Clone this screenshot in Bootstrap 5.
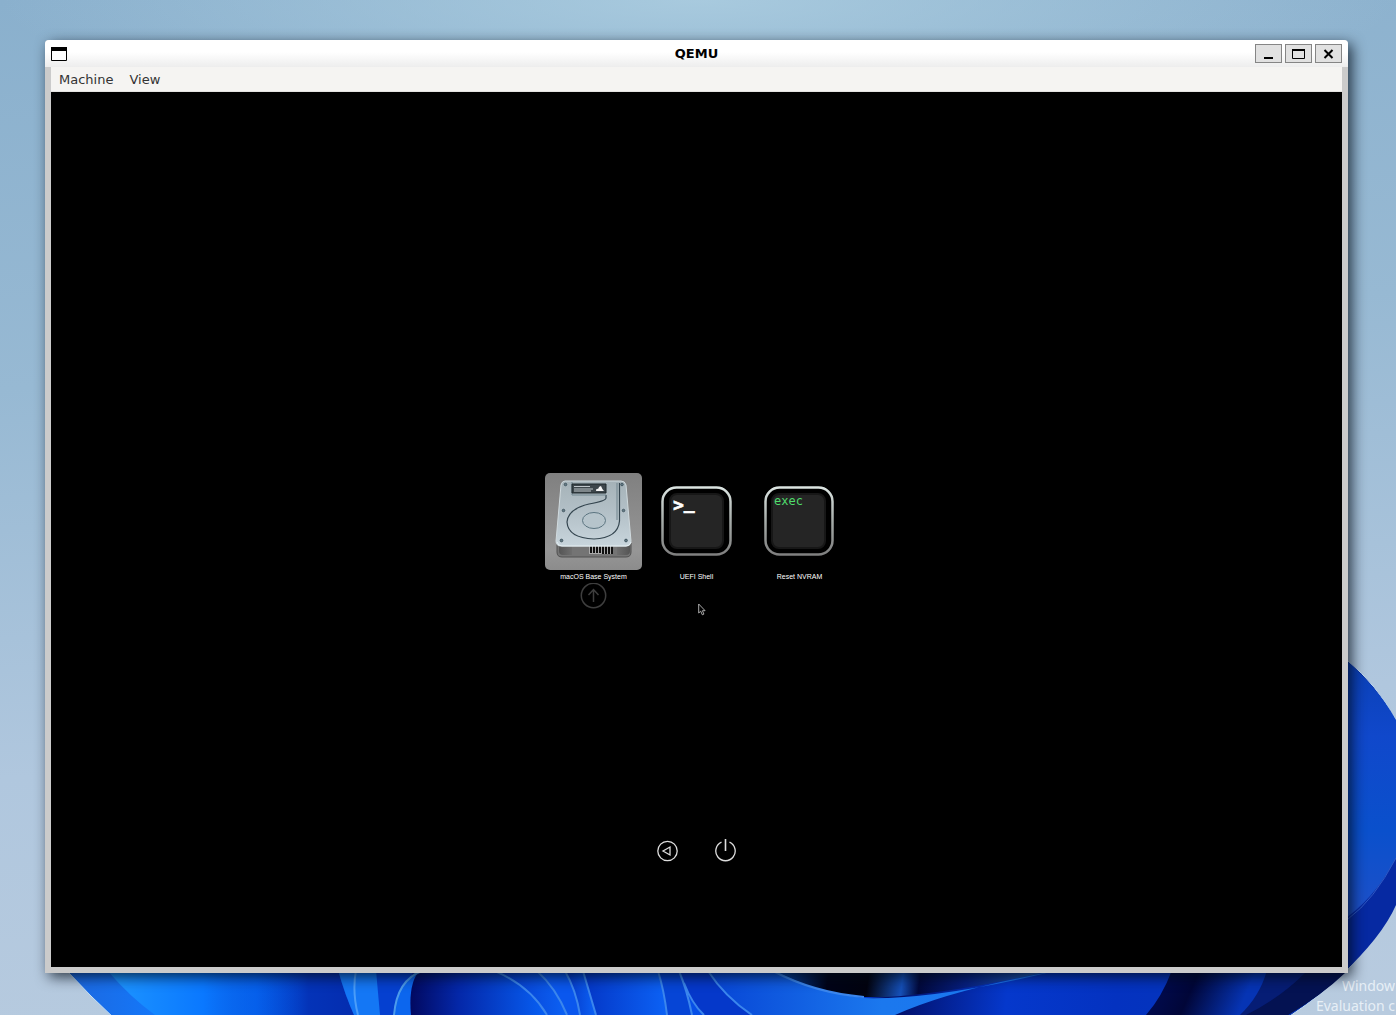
<!DOCTYPE html>
<html lang="en">
<head>
<meta charset="utf-8">
<meta name="viewport" content="width=device-width, initial-scale=1">
<title>QEMU</title>
<link rel="stylesheet" href="https://cdn.jsdelivr.net/npm/bootstrap@5.3.0/dist/css/bootstrap.min.css">
<style>
body { font-family: "DejaVu Sans", sans-serif; font-size: 13px; line-height: 16px; background: #a9c4db; }
.desktop { padding: 40px 48px 42px 45px; background: radial-gradient(ellipse 50% 12% at 50% 0, rgba(175, 208, 226, .8), transparent), linear-gradient(176deg, #8ab0cd 0%, #97b9d3 35%, #b0c7de 70%, #b8cbdf 100%); }
.wallpaper { z-index: 0; }
.watermark { right: 1px; bottom: -1px; font-family: "Noto Sans", sans-serif; font-size: 14px; line-height: 20px; color: #f0f6fb; opacity: .85; }
.vm-window { z-index: 1; border-radius: 4px 4px 0 0; background: #cbcbcb; box-shadow: 4px 4px 14px rgba(0, 10, 20, .75); }
.titlebar { height: 27px; padding: 0 6px; border-radius: 4px 4px 0 0; background: linear-gradient(#fff 45%, #ededed); color: #000; }
.title-side { width: 87px; gap: 3px; }
.title-btn { width: 27px; height: 19px; padding: 0; border: 1px solid #858585; border-radius: 0; background: #e1e1e1; }
.title-btn svg { display: block; margin: auto; }
.frame { padding: 0 6px 6px; }
.menus { height: 25px; background: #f5f4f2; border-bottom: 1px solid #e4e3e1; padding: 1px 8px 0; gap: 16px; }
.menus a { color: #333; text-decoration: none; }
.screen { background: #000; display: grid; grid-template-rows: 381fr 136px 358fr; color: #fff; font-family: "Liberation Sans", sans-serif; }
.entries { grid-row: 2; gap: 6px; }
.entry { width: 97px; padding: 0; border: 0; background: none; color: #fff; font-size: 7px; line-height: 13px; white-space: nowrap; }
.entry-tile { height: 97px; border-radius: 5px; }
.entry.selected .entry-tile { background: linear-gradient(#808080, #969696 80%, #8c8c8c); }
.tools { grid-row: 3; padding-bottom: 105px; gap: 36px; }
.tools button { padding: 0; border: 0; background: none; }
.tools svg, .entry svg { display: block; }
.pointer { left: calc(50% + 1px); top: calc(50% + 73px); }
.exec-text { font: 12px "DejaVu Sans Mono", monospace; fill: #4fdc6c; }
.prompt-text { font: bold 18px "DejaVu Sans Mono", monospace; fill: #fff; }
</style>
<script src="https://cdn.jsdelivr.net/npm/bootstrap@5.3.0/dist/js/bootstrap.bundle.min.js"></script>
</head>
<body>
<div class="desktop position-relative overflow-hidden vh-100 d-flex flex-column">
  <svg class="wallpaper position-absolute top-0 start-0 w-100 h-100" viewBox="0 0 1396 1015" preserveAspectRatio="none" aria-hidden="true">
    <defs>
      <linearGradient id="petals" gradientUnits="userSpaceOnUse" x1="70" y1="0" x2="1396" y2="0">
        <stop offset="0" stop-color="#1c68e0"/><stop offset=".08" stop-color="#127bff"/><stop offset=".14" stop-color="#056bfb"/><stop offset=".18" stop-color="#0433b8"/><stop offset=".24" stop-color="#0428a8"/><stop offset=".4" stop-color="#0756ef"/><stop offset=".7" stop-color="#0538cf"/><stop offset="1" stop-color="#061a80"/>
      </linearGradient>
      <linearGradient id="rightPetal" x1="0" y1="0" x2="0" y2="1">
        <stop offset="0" stop-color="#0a3fb4"/><stop offset=".3" stop-color="#1048cb"/><stop offset=".65" stop-color="#0a50cc"/><stop offset="1" stop-color="#2050c8"/>
      </linearGradient>
      <linearGradient id="brightLeft" gradientUnits="userSpaceOnUse" x1="107" y1="0" x2="300" y2="0">
        <stop offset="0" stop-color="#1e96ff"/><stop offset=".5" stop-color="#0a78ff"/><stop offset="1" stop-color="#0433b8" stop-opacity="0"/>
      </linearGradient>
      <linearGradient id="inner" x1="0" y1="0" x2="1" y2="0">
        <stop offset="0" stop-color="#020960"/><stop offset=".35" stop-color="#0427a8"/><stop offset="1" stop-color="#0760f5"/>
      </linearGradient>
      <linearGradient id="fold" x1="0" y1="0" x2="1" y2="0">
        <stop offset="0" stop-color="#0436c6"/><stop offset="1" stop-color="#0c62f5"/>
      </linearGradient>
      <linearGradient id="wide" x1="0" y1="0" x2="1" y2="0">
        <stop offset="0" stop-color="#0745d5"/><stop offset=".5" stop-color="#1b78ee"/><stop offset="1" stop-color="#1a76f0"/>
      </linearGradient>
      <linearGradient id="deep" gradientUnits="userSpaceOnUse" x1="773" y1="960" x2="1055" y2="1000">
        <stop offset="0" stop-color="#0752c8"/><stop offset=".2" stop-color="#000318"/><stop offset=".34" stop-color="#02030f"/><stop offset=".46" stop-color="#1550b8"/><stop offset=".52" stop-color="#02093c"/><stop offset=".68" stop-color="#061f80"/><stop offset="1" stop-color="#2a6fc4"/>
      </linearGradient>
      <linearGradient id="east" gradientUnits="userSpaceOnUse" x1="900" y1="975" x2="1260" y2="1015">
        <stop offset="0" stop-color="#02106a"/><stop offset=".3" stop-color="#0538cc"/><stop offset=".6" stop-color="#0432c0"/><stop offset="1" stop-color="#0436b8"/>
      </linearGradient>
      <linearGradient id="crease" gradientUnits="userSpaceOnUse" x1="1155" y1="985" x2="1235" y2="1020">
        <stop offset="0" stop-color="#010b50"/><stop offset=".4" stop-color="#010638"/><stop offset="1" stop-color="#0634b4"/>
      </linearGradient>
    </defs>
    <path d="M68 972Q90 996 116 1020H1284Q1322 995 1350 967Q1382 932 1396 905V720Q1376 684 1348 661L1300 640V940H68Z" fill="url(#petals)" stroke="#c7e2f5"/>
    <path d="M1340 655Q1376 684 1396 720V868Q1372 905 1340 925Z" fill="url(#rightPetal)"/>
    <path d="M1396 858Q1374 900 1340 922V976Q1382 937 1396 905Z" fill="#0629a2"/>
    <path d="M1396 858Q1374 900 1348 919" fill="none" stroke="#2f59c4"/>
    <path d="M107 970Q130 997 155 1015H300V970Z" fill="url(#brightLeft)"/>
    <path d="M338 970Q345 995 354 1015H412V970Z" fill="#0540d0"/>
    <path d="M338 970Q345 995 354 1015H380L376 970Z" fill="#1477f5"/>
    <path d="M356 970Q352 992 358 1015" fill="none" stroke="#4a9df9" stroke-width="2"/>
    <path d="M394 1015Q397 980 422 970H500L555 1015Z" fill="#0c66ee"/>
    <path d="M411 1015Q408 983 420 970H495Q526 983 547 1015Z" fill="url(#inner)"/>
    <path d="M394 1015Q397 980 422 971" fill="none" stroke="#4c9bec" stroke-width="2"/>
    <path d="M495 970Q528 986 547 1015H567Q555 988 537 970Z" fill="url(#fold)"/>
    <path d="M537 970Q556 988 567 1015H580Q576 988 565 970Z" fill="#0a57ee"/>
    <path d="M565 970Q576 990 580 1015H596L583 970Z" fill="url(#fold)"/>
    <path d="M583 970L596 1015H667Q664 990 658 970Z" fill="url(#fold)"/>
    <path d="M658 970Q664 990 667 1015H692Q688 990 679 970Z" fill="#0645d6"/>
    <path d="M679 970Q687 1000 704 1015H752Q725 997 708 970Z" fill="#0538ca"/>
    <path d="M773 970Q830 999 864 997H940L1070 970Z" fill="url(#deep)"/>
    <path d="M864 998Q950 996 1070 966H1350Q1322 995 1290 1015H860Z" fill="url(#east)"/>
    <path d="M708 970Q725 997 752 1015H895Q950 990 1055 971Q935 1000 864 998Q810 991 773 970Z" fill="url(#wide)"/>
    <path d="M495 971Q530 986 547 1015M537 971Q556 988 567 1015M565 971Q576 990 580 1015M583 971L596 1015M658 971Q664 990 667 1015M679 971Q687 990 692 1015M684 983Q692 1004 704 1015M708 971Q725 997 752 1015M773 971Q815 993 864 997" fill="none" stroke="#3b86ed" stroke-width="2"/>
    <path d="M1172 970Q1162 997 1146 1015H1242Q1260 996 1267 970Z" fill="url(#crease)"/>
    <path d="M1267 970Q1260 996 1240 1015H1288Q1322 995 1347 970Z" fill="#061d75"/>
    <path d="M1305 973Q1280 998 1246 1015H1288Q1322 995 1345 973Z" fill="#041252"/>
  </svg>
  <div class="watermark position-absolute text-end">Window<br>Evaluation c</div>

  <main class="vm-window position-relative flex-fill d-flex flex-column">
    <header class="titlebar d-flex justify-content-between align-items-center">
      <div class="title-side">
        <svg class="d-block" width="16" height="14" aria-hidden="true"><path d="M.5 .5h15v13H.5z" fill="#fff" stroke="#000"/><path d="M0 0h16v4H0z"/></svg>
      </div>
      <strong>QEMU</strong>
      <div class="title-side d-flex justify-content-end">
        <button class="title-btn" aria-label="Minimize"><svg width="25" height="17"><path d="M8 12h9v2H8z"/></svg></button>
        <button class="title-btn" aria-label="Maximize"><svg width="25" height="17"><path d="M6.500 4.500h12v9h-12z" fill="none" stroke="#000"/><path d="M6 4h13v2H6z"/></svg></button>
        <button class="title-btn" aria-label="Close"><svg width="25" height="17"><path d="M8.500 5l8 8m0-8l-8 8" fill="none" stroke="#000" stroke-width="2"/></svg></button>
      </div>
    </header>
    <div class="frame flex-fill d-flex flex-column">
      <nav class="menus d-flex align-items-center"><a href="#">Machine</a><a href="#">View</a></nav>
      <section class="screen position-relative flex-fill">
        <div class="entries d-flex justify-content-center align-items-start">
          <button class="entry selected">
            <span class="entry-tile d-block">
              <svg width="97" height="97" viewBox="0 0 97 97" aria-hidden="true">
                <defs>
                  <linearGradient id="metal" x1="0" y1="0" x2="0" y2="1"><stop offset="0" stop-color="#a5b2b8"/><stop offset=".5" stop-color="#b4c1c8"/><stop offset="1" stop-color="#c8d5dc"/></linearGradient>
                  <linearGradient id="foot"><stop offset="0" stop-color="#555"/><stop offset=".5" stop-color="#999"/><stop offset="1" stop-color="#555"/></linearGradient>
                </defs>
                <path d="M12 70h74v9q0 5-5 5H17q-5 0-5-5z" fill="#747474" stroke="#505050"/>
                <path d="M14 72h13v10h-9q-4 0-4-4zM72 72h13v6q0 4-4 4h-9z" fill="url(#foot)"/>
                <path d="M44 73h24v8H44z" fill="#aaa"/>
                <path d="M46 73v7m3-7v7m3-7v7m3-7v7m3-7v8m3-8v8m3-8v8m3-8v8" stroke="#111" stroke-width="2"/>
                <path d="M20 8h56q4 0 5 4l5 56q0 5-5 5H16q-5 0-5-5l5-56q1-4 4-4z" fill="url(#metal)" stroke="#d0dade"/>
                <path d="M12 69q1 4 5 4h64q4 0 5-4" fill="none" stroke="#e4eef2"/>
                <path d="M74.500 10v38Q73 65 49 66Q23 65 22 49Q23 36 44 31Q61 28 61 25V22" fill="none" stroke="#34454f" stroke-width="1.200"/>
                <path d="M72 10v37M27 9v13h34" fill="none" stroke="#71858e"/>
                <ellipse cx="49" cy="47.500" rx="11.500" ry="8" fill="#b6c4cb" stroke="#5b7480"/>
                <path d="M27 11h34v9H27z" fill="#3d464b" stroke="#1e282d"/>
                <path d="M29 13.500h16M29 16h19M29 18h17" stroke="#bfc6ca"/>
                <path d="M51 18q0-3 2-2 1-3 3-3 1 3 3 5z" fill="#f5f5f5"/>
                <g fill="#657d88" stroke="#31434d" stroke-width=".7"><circle cx="20.500" cy="11.500" r="1.300"/><circle cx="77" cy="11.500" r="1.300"/><circle cx="18.500" cy="37.500" r="1.300"/><circle cx="78.500" cy="37.500" r="1.300"/><circle cx="16.500" cy="67.500" r="1.400"/><circle cx="81" cy="67.500" r="1.400"/></g>
              </svg>
            </span>
            <span class="d-block">macOS Base System</span>
            <svg class="mx-auto" width="27" height="26" viewBox="0 0 27 26" fill="none" stroke="#3e3e3e" stroke-width="1.500" aria-hidden="true"><circle cx="13.500" cy="12.500" r="12.200"/><path d="M13.500 19V7M8.500 12l5-5.500 5 5.500"/></svg>
          </button>
          <button class="entry">
            <span class="entry-tile d-block">
              <svg width="97" height="97" viewBox="0 0 97 97" aria-hidden="true">
                <defs>
                  <linearGradient id="rim" x1="0" y1="0" x2="0" y2="1"><stop offset="0" stop-color="#dbe4e1"/><stop offset=".5" stop-color="#a6aca9"/><stop offset="1" stop-color="#808080"/></linearGradient>
                </defs>
                <rect x="14.500" y="14.500" width="68" height="67" rx="14" fill="#000" stroke="url(#rim)" stroke-width="2.500"/>
                <rect x="22" y="21" width="53" height="54" rx="7" fill="#252525" stroke="#171717" stroke-width="2"/>
                <text class="prompt-text" x="25" y="38" stroke="#fff" stroke-width=".6">&gt;<tspan y="36">_</tspan></text>
              </svg>
            </span>
            <span class="d-block">UEFI Shell</span>
          </button>
          <button class="entry">
            <span class="entry-tile d-block">
              <svg width="97" height="97" viewBox="0 0 97 97" aria-hidden="true">
                <rect x="14.500" y="14.500" width="67" height="67" rx="14" fill="#000" stroke="url(#rim)" stroke-width="2.500"/>
                <rect x="21" y="21" width="53" height="54" rx="7" fill="#252525" stroke="#171717" stroke-width="2"/>
                <text class="exec-text" x="23" y="32">exec</text>
              </svg>
            </span>
            <span class="d-block">Reset NVRAM</span>
          </button>
        </div>
        <div class="tools d-flex justify-content-center align-items-end">
          <button aria-label="Restart"><svg width="22" height="24" viewBox="0 0 22 24" fill="none" stroke="#ddd" stroke-width="1.300"><circle cx="10.500" cy="13" r="9.700"/><path d="M13 9v8L6 13z"/></svg></button>
          <button aria-label="Shut down"><svg width="22" height="24" viewBox="0 0 22 24" fill="none" stroke="#ddd" stroke-width="1.300"><path d="M6.500 4.200a9.700 9.700 0 1 0 8 0"/><path d="M10.500 1v12" stroke-width="1.600"/></svg></button>
        </div>
        <svg class="pointer position-absolute" width="8" height="13" viewBox="0 0 8 13" aria-hidden="true"><path d="M.7 1v9l2-1.800 1.600 3.600 1.600-.7-1.500-3.400h2.700z" fill="#000" stroke="#bbb" stroke-width=".9"/></svg>
      </section>
    </div>
  </main>
</div>
</body>
</html>
